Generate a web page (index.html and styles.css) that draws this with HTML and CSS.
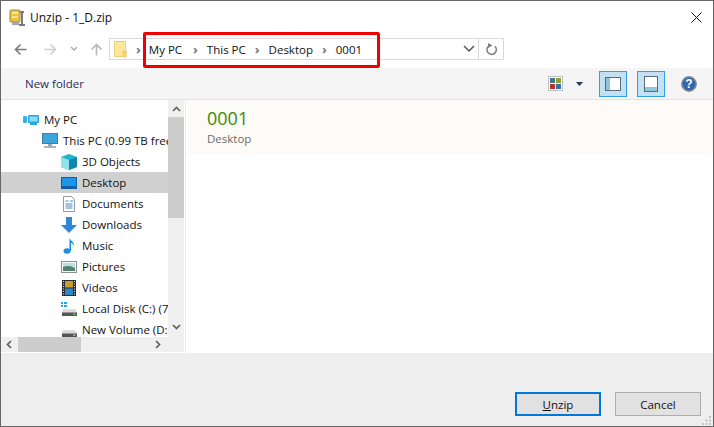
FILE: index.html
```html
<!DOCTYPE html>
<html lang="en">
<head>
<meta charset="utf-8">
<title>Unzip - 1_D.zip</title>
<link rel="stylesheet" href="styles.css">
</head>
<body>
<div class="window">
  <header class="titlebar">
    <svg class="app-icon" width="17" height="18" viewBox="0 0 17 18">
      <rect x="1" y="1" width="10" height="12" rx="1" fill="#e9c244" stroke="#a08a40"/>
      <rect x="3" y="3" width="6" height="2" fill="#fbe98c"/>
      <rect x="3" y="7" width="6" height="2" fill="#fbe98c"/>
      <path d="M13 3v12M10 16h6M11 3h4" stroke="#7a7a7a" stroke-width="2" fill="none"/>
      <rect x="3" y="13" width="7" height="3" fill="#a5a5a5"/>
    </svg>
    <span class="title">Unzip - 1_D.zip</span>
    <svg class="close" width="11" height="11" viewBox="0 0 11 11"><path d="M.5.5l10 10M10.500.5l-10 10" stroke="#111" stroke-width="1" fill="none"/></svg>
  </header>

  <nav class="navbar">
    <svg class="nav-icon" width="13" height="13" viewBox="0 0 13 13"><path d="M12.500 6.500H1.500M6.500 1.500l-5 5 5 5" stroke="#7a7a7a" stroke-width="1.600" fill="none"/></svg>
    <svg class="nav-icon fwd" width="13" height="13" viewBox="0 0 13 13"><path d="M.5 6.500h11M6.500 1.500l5 5-5 5" stroke="#cfcfcf" stroke-width="1.600" fill="none"/></svg>
    <svg class="nav-icon down" width="8" height="6" viewBox="0 0 8 6"><path d="M1 1l3 3 3-3" stroke="#a8a8a8" stroke-width="1.400" fill="none"/></svg>
    <svg class="nav-icon up" width="13" height="13" viewBox="0 0 13 13"><path d="M6.500 12.500v-11M1.500 6.500l5-5 5 5" stroke="#b8b8b8" stroke-width="1.600" fill="none"/></svg>
    <div class="address">
      <svg class="folder" width="13" height="17" viewBox="0 0 13 17"><path d="M.5.5h11v15H.5z" fill="#fde89a" stroke="#e8cf7c"/><path d="M9 10h3.500v6H9z" fill="#f5d56f" stroke="#e2c468" stroke-width=".6"/></svg>
      <span class="sep first">›</span>
      <span class="crumb">My PC</span><span class="sep wide">›</span>
      <span class="crumb">This PC</span><span class="sep">›</span>
      <span class="crumb">Desktop</span><span class="sep">›</span>
      <span class="crumb">0001</span>
      <svg class="addr-drop" width="12" height="8" viewBox="0 0 12 8"><path d="M1 1l5 5 5-5" stroke="#555" stroke-width="1.500" fill="none"/></svg>
      <span class="refresh">
        <svg width="13" height="13" viewBox="0 0 13 13"><path d="M9.800 3.200a4.700 4.700 0 1 1-5.500-.6" stroke="#7d7d7d" stroke-width="1.500" fill="none"/><path d="M3 0l4.500 2.500L3 5z" fill="#7d7d7d"/></svg>
      </span>
    </div>
    <div class="highlight"></div>
  </nav>

  <div class="toolbar">
    <span class="new-folder">New folder</span>
    <svg class="views" width="15" height="15" viewBox="0 0 15 15">
      <rect x=".5" y=".5" width="14" height="14" fill="#fff" stroke="#b9c2cc"/>
      <rect x="2" y="2" width="5" height="5" fill="#4a7488"/><rect x="8" y="2" width="5" height="5" fill="#8da32e"/>
      <rect x="2" y="8" width="5" height="5" fill="#b23a1c"/><rect x="8" y="8" width="5" height="5" fill="#3a6fa6"/>
    </svg>
    <svg class="caret" width="7" height="4" viewBox="0 0 7 4"><path d="M0 0h7L3.500 4z" fill="#1f3a5c"/></svg>
    <span class="toggle">
      <svg width="16" height="14" viewBox="0 0 16 14"><rect x=".5" y=".5" width="15" height="13" fill="#fff" stroke="#5c6b78"/><rect x="1" y="1" width="4" height="12" fill="#8fc6dc"/></svg>
    </span>
    <span class="toggle second">
      <svg width="14" height="16" viewBox="0 0 14 16"><rect x=".5" y=".5" width="13" height="15" fill="#fff" stroke="#5c6b78"/><rect x="1" y="11" width="12" height="4" fill="#8fc6dc"/></svg>
    </span>
    <svg class="help" width="16" height="16" viewBox="0 0 16 16"><circle cx="8" cy="8" r="7.200" fill="#2f66b5" stroke="#8c8c8c" stroke-width="1.500"/><text x="8" y="12" class="help-q">?</text></svg>
  </div>

  <main class="content">
    <aside class="sidepane">
      <div class="tree-wrap">
        <ul class="tree">
          <li class="lvl1"><span class="ico"><svg width="16" height="10" viewBox="0 0 16 10"><rect x="0" y="1" width="4" height="7" rx="1" fill="#35b4e6"/><rect x="5" y="0" width="11" height="8" rx="1" fill="#2aa9e0"/><rect x="6.500" y="1.500" width="8" height="5" fill="#8adcf7"/><rect x="7" y="8" width="7" height="2" fill="#2aa9e0"/></svg></span><span>My PC</span></li>
          <li class="lvl2"><span class="ico"><svg width="16" height="15" viewBox="0 0 16 15"><rect x=".5" y=".5" width="15" height="10" fill="#3aa5de" stroke="#4a7f9c"/><path d="M6 11h4v2H6z" fill="#9aa9b4"/><path d="M2 14h12" stroke="#8c9aa6" stroke-width="1.500"/></svg></span><span>This PC (0.99 TB free)</span></li>
          <li><span class="ico"><svg width="16" height="16" viewBox="0 0 16 16"><path d="M8 0l8 3v10l-8 3-8-3V3z" fill="#1eb4cf"/><path d="M0 3l8 3v10l-8-3z" fill="#8fe3ee"/><path d="M8 6l8-3v10l-8 3z" fill="#0f87ad"/></svg></span><span>3D Objects</span></li>
          <li class="selected"><span class="ico"><svg width="16" height="12" viewBox="0 0 16 12"><rect x=".5" y=".5" width="15" height="11" fill="#1c96ea" stroke="#0e5ea8"/><path d="M1 10h14" stroke="#0b4f93" stroke-width="1.500"/></svg></span><span>Desktop</span></li>
          <li><span class="ico"><svg width="12" height="16" viewBox="0 0 12 16"><path d="M.5.5h8l3 3v12H.5z" fill="#fff" stroke="#8f9aa3"/><path d="M2.500 5h3M7 5h3M2.500 8h7M2.500 10h7M2.500 12h7" stroke="#4b86bf"/></svg></span><span>Documents</span></li>
          <li><span class="ico"><svg width="16" height="16" viewBox="0 0 16 16"><path d="M5 0h6v8h5l-8 8-8-8h5z" fill="#2f87d8"/></svg></span><span>Downloads</span></li>
          <li><span class="ico"><svg width="12" height="16" viewBox="0 0 12 16"><ellipse cx="4" cy="13" rx="3.500" ry="2.800" fill="#1d8fe0"/><path d="M6.500 13V0c1 3 5 3.500 4.500 8-1-2.500-2.500-3-3-3v8z" fill="#1d8fe0"/></svg></span><span>Music</span></li>
          <li><span class="ico"><svg width="16" height="12" viewBox="0 0 16 12"><rect x=".5" y=".5" width="15" height="11" fill="#f4f8fa" stroke="#8a8f94"/><rect x="2" y="2" width="12" height="8" fill="#bcdcea"/><path d="M2 6c4-2 8-1 12 1v3H2z" fill="#55806e"/></svg></span><span>Pictures</span></li>
          <li><span class="ico"><svg width="14" height="16" viewBox="0 0 14 16"><rect width="14" height="16" fill="#2a2f36"/><rect x="3" y="1" width="8" height="6.500" fill="#c99a2c"/><rect x="3" y="8.500" width="8" height="6.500" fill="#2f86c8"/><path d="M1.500 1v14M12.500 1v14" stroke="#ddd" stroke-width="1" stroke-dasharray="1 1.500"/></svg></span><span>Videos</span></li>
          <li><span class="ico"><svg width="16" height="14" viewBox="0 0 16 14"><path d="M0 0h2v2H0zM3 0h3v2H3zM0 3h2v2H0zM3 3h3v2H3z" fill="#1ea7ea"/><path d="M2 7h12l2 3v4H1v-4z" fill="#dcdcdc"/><rect x="1" y="10.500" width="15" height="3.500" fill="#555"/><rect x="12" y="11.500" width="2.500" height="1.500" fill="#5fd04f"/></svg></span><span>Local Disk (C:) (76.2 GB)</span></li>
          <li><span class="ico"><svg width="16" height="14" viewBox="0 0 16 14"><path d="M2 7h12l2 3v4H1v-4z" fill="#dcdcdc"/><rect x="1" y="10.500" width="15" height="3.500" fill="#555"/><rect x="12" y="11.500" width="2.500" height="1.500" fill="#5fd04f"/></svg></span><span>New Volume (D:) (800 GB)</span></li>
        </ul>
      </div>
      <div class="vscroll">
        <svg class="arrow" width="9" height="6" viewBox="0 0 9 6"><path d="M1 5l3.500-3.500L8 5" stroke="#606060" stroke-width="1.700" fill="none"/></svg>
        <div class="vtrack"><div class="vthumb"></div></div>
        <svg class="arrow" width="9" height="6" viewBox="0 0 9 6"><path d="M1 1l3.500 3.500L8 1" stroke="#606060" stroke-width="1.700" fill="none"/></svg>
      </div>
      <div class="hscroll">
        <svg class="arrow" width="6" height="9" viewBox="0 0 6 9"><path d="M5 1L1.500 4.500 5 8" stroke="#606060" stroke-width="1.700" fill="none"/></svg>
        <div class="htrack"><div class="hthumb"></div></div>
        <svg class="arrow" width="6" height="9" viewBox="0 0 6 9"><path d="M1 1l3.500 3.500L1 8" stroke="#606060" stroke-width="1.700" fill="none"/></svg>
      </div>
    </aside>
    <section class="details">
      <div class="info">
        <div class="info-name">0001</div>
        <div class="info-sub">Desktop</div>
      </div>
    </section>
  </main>

  <footer class="footer">
    <button class="btn primary"><u>U</u>nzip</button>
    <button class="btn">Cancel</button>
    <svg class="grip" width="10" height="10" viewBox="0 0 10 10"><path d="M7 0h2v2H7zM3.500 3.500h2v2h-2zM7 3.500h2v2H7zM0 7h2v2H0zM3.500 7h2v2h-2zM7 7h2v2H7z" fill="#c4c4c4"/></svg>
  </footer>
</div>
</body>
</html>
```

FILE: styles.css
```css
* { box-sizing: border-box; }
html, body { margin: 0; padding: 0; }
body { width: 714px; height: 427px; overflow: hidden; background: #fff; font-family: "Open Sans", "Noto Sans", sans-serif; font-size: 11.5px; color: #111; }
svg { display: block; flex: none; }

.window { width: 714px; height: 427px; display: flex; flex-direction: column; border: 1px solid #666; background: #fff; }

.titlebar { height: 33px; display: flex; align-items: center; padding: 0 11px 0 8px; }
.app-icon { margin-right: 4px; }
.title { font-size: 12px; color: #111; margin-top: -1px; }
.close { margin-left: auto; margin-top: -1px; }

.navbar { height: 34px; position: relative; display: flex; align-items: center; padding-left: 13px; padding-bottom: 4px; }
.nav-icon.fwd { margin-left: 17px; }
.nav-icon.down { margin-left: 13px; }
.nav-icon.up { margin-left: 12px; }

.address { width: 395px; height: 22px; margin-left: 6px; border: 1px solid #d9d9d9; display: flex; align-items: center; padding-left: 4px; }
.folder { margin-right: 6px; }
.crumb { font-size: 11.5px; color: #111; }
.sep { color: #777; font-size: 13px; font-weight: 700; margin: 0 9px; line-height: 1; }
.sep.first { margin: 0 8px 0 3px; }
.sep.wide { margin-left: 11px; }
.addr-drop { margin-left: auto; margin-right: 3px; }
.refresh { width: 25px; height: 20px; border-left: 1px solid #d9d9d9; display: flex; align-items: center; justify-content: center; }

.highlight { position: absolute; left: 142px; top: -2px; width: 237px; height: 36px; border: 3px solid #f00000; border-radius: 2px; }

.toolbar { height: 32px; background: #f5f5f5; border-bottom: 1px solid #e3e3e3; display: flex; align-items: center; padding: 0 16px 0 24px; }
.new-folder { color: #2a2a5a; font-size: 11.5px; }
.views { margin-left: auto; }
.caret { margin-left: 13px; }
.toggle { width: 28px; height: 26px; margin-left: 16px; background: #c4e0f3; border: 1px solid #33a0e6; display: flex; align-items: center; justify-content: center; }
.toggle.second { margin-left: 10px; }
.help { margin-left: 16px; }
.help-q { font-family: "Liberation Sans", sans-serif; font-size: 12px; font-weight: 700; fill: #fff; text-anchor: middle; }

.content { height: 253px; display: flex; }
.sidepane { width: 184px; display: grid; grid-template-columns: 167px 16px; grid-template-rows: 237px 15px; }

.tree-wrap { overflow: hidden; }
.tree { list-style: none; margin: 0; padding: 9px 0 0; }
.tree li { height: 21px; display: flex; align-items: center; white-space: nowrap; padding-left: 60px; }
.tree li.lvl1 { padding-left: 22px; }
.tree li.lvl2 { padding-left: 41px; }
.tree li.selected { background: #d0d0d0; }
.ico { width: 16px; margin-right: 5px; flex: none; display: flex; justify-content: center; }

.vscroll { background: #f0f0f0; display: flex; flex-direction: column; align-items: center; padding: 6px 0 7px; }
.vtrack { flex: 1; width: 100%; padding-top: 5px; }
.vthumb { height: 101px; background: #cdcdcd; }
.hscroll { grid-column: 1 / 3; background: #f0f0f0; display: flex; align-items: center; padding: 0 23px 0 5px; }
.htrack { flex: 1; padding-left: 6px; }
.hthumb { width: 63px; height: 15px; background: #cdcdcd; }

.details { flex: 1; border-left: 1px solid #ececec; }
.info { height: 55px; background: #fcfbf7; padding: 7px 20px; margin-left: 1px; }
.info-name { font-size: 18px; line-height: 22px; color: #3d8a00; }
.info-sub { font-size: 11.5px; line-height: 18px; color: #6d6d6d; margin-top: 1px; }

.footer { flex: 1; background: #eeeeee; display: flex; align-items: flex-end; padding: 0 12px 10px 0; justify-content: flex-end; position: relative; }
.btn { width: 86px; height: 24px; padding: 0; background: #e1e1e1; border: 1px solid #adadad; font: inherit; color: #111; }
.btn.primary { border: 2px solid #0078d7; margin-right: 14px; }
.grip { position: absolute; right: 1px; bottom: 0; }
```
